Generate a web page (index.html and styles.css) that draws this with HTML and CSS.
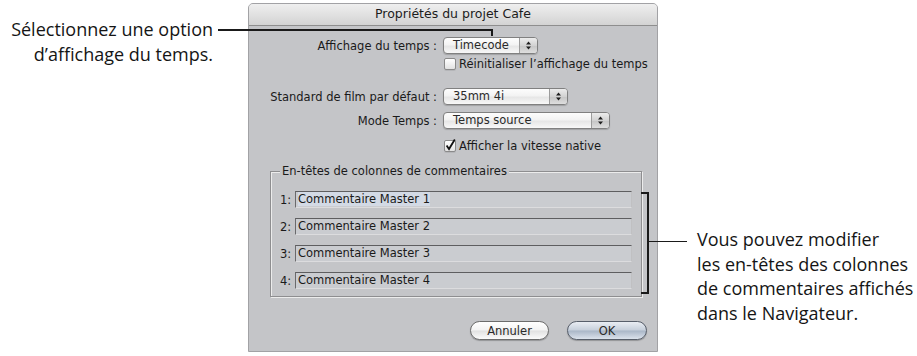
FILE: index.html
```html
<!DOCTYPE html>
<html lang="fr">
<head>
    <meta charset="UTF-8">
    <title>Propriétés du projet Cafe</title>
    <link rel="stylesheet" href="styles.css">
</head>
<body>
    <div class="page">
        <div class="note note-left">Sélectionnez une option<br>d’affichage du temps.</div>

        <div class="window">
            <div class="titlebar">Propriétés du projet Cafe</div>
            <div class="content">
                <div class="row row-popup first">
                    <label>Affichage du temps :</label>
                    <div class="popup w-time">
                        <span class="value">Timecode</span>
                        <span class="arrows"><svg width="5" height="9" viewBox="0 0 5 9"><polygon points="0,3.6 2.5,0.6 5,3.6"/><polygon points="0,5.4 2.5,8.4 5,5.4"/></svg></span>
                    </div>
                </div>
                <div class="row row-check first-check">
                    <span></span>
                    <label class="check"><span class="box"></span>Réinitialiser l’affichage du temps</label>
                </div>
                <div class="row row-popup second">
                    <label>Standard de film par défaut :</label>
                    <div class="popup w-film">
                        <span class="value">35mm 4i</span>
                        <span class="arrows"><svg width="5" height="9" viewBox="0 0 5 9"><polygon points="0,3.6 2.5,0.6 5,3.6"/><polygon points="0,5.4 2.5,8.4 5,5.4"/></svg></span>
                    </div>
                </div>
                <div class="row row-popup third">
                    <label>Mode Temps :</label>
                    <div class="popup w-mode">
                        <span class="value">Temps source</span>
                        <span class="arrows"><svg width="5" height="9" viewBox="0 0 5 9"><polygon points="0,3.6 2.5,0.6 5,3.6"/><polygon points="0,5.4 2.5,8.4 5,5.4"/></svg></span>
                    </div>
                </div>
                <div class="row row-check second-check">
                    <span></span>
                    <label class="check"><span class="box"><svg width="12" height="12" viewBox="0 0 12 12"><path d="M2.6 5.6 L5 9 L10.8 -0.5"/></svg></span>Afficher la vitesse native</label>
                </div>

                <div class="group">
                    <div class="group-title">En-têtes de colonnes de commentaires</div>
                    <div class="field-row"><span class="num">1:</span><div class="field"><span class="sel">Commentaire Master 1</span></div></div>
                    <div class="field-row"><span class="num">2:</span><div class="field">Commentaire Master 2</div></div>
                    <div class="field-row"><span class="num">3:</span><div class="field">Commentaire Master 3</div></div>
                    <div class="field-row"><span class="num">4:</span><div class="field">Commentaire Master 4</div></div>
                </div>

                <div class="buttons">
                    <button class="btn btn-cancel">Annuler</button>
                    <button class="btn btn-default">OK</button>
                </div>
            </div>
        </div>

        <div class="note note-right">Vous pouvez modifier<br>les en-têtes des colonnes<br>de commentaires affichés<br>dans le Navigateur.</div>

        <!-- traits de légende -->
        <div class="line line-left"></div>
        <div class="line line-tick"></div>
        <div class="line bracket"></div>
        <div class="line line-right"></div>
    </div>
</body>
</html>
```

FILE: styles.css
```css
body {
    margin: 0;
    background: #fff;
    font-family: "DejaVu Sans", sans-serif;
}
.page {
    position: relative;
    display: flex;
    width: 917px;
    height: 356px;
    overflow: hidden;
}
.note {
    flex: none;
    font-family: "Open Sans", sans-serif;
    font-size: 18px;
    line-height: 24.5px;
    color: #151515;
}
.note-left {
    width: 248px;
    box-sizing: border-box;
    padding: 17px 35px 0 0;
    text-align: right;
}
.note-right {
    padding: 227px 0 0 39px;
    white-space: nowrap;
}
.window {
    flex: none;
    width: 410px;
    height: 349px;
    margin-top: 3px;
    box-sizing: border-box;
    background: #c4c5c8;
    border: 1px solid #a2a2a5;
    border-radius: 5px 5px 0 0;
}
.titlebar {
    height: 21px;
    line-height: 20px;
    text-align: center;
    font-size: 12.5px;
    color: #1c1c1c;
    background: linear-gradient(#efefef, #d3d3d3);
    border-bottom: 1px solid #8e8e8e;
    border-radius: 4px 4px 0 0;
}
.content {
    font-size: 11.5px;
    color: #1a1a1a;
}
.row {
    display: grid;
    grid-template-columns: 188px auto;
    column-gap: 6px;
    align-items: center;
}
.row label {
    text-align: right;
    white-space: nowrap;
}
.row-popup {
    height: 16px;
}
.row-check {
    height: 12px;
}
.first { margin-top: 11px; }
.first-check { margin-top: 4px; }
.second { margin-top: 19px; }
.third { margin-top: 8px; }
.second-check { margin-top: 11px; }

.popup {
    display: flex;
    align-items: stretch;
    height: 17px;
    box-sizing: border-box;
    border: 1px solid #808080;
    border-radius: 4px;
    background: linear-gradient(#fdfdfd, #f3f3f3 45%, #e6e6e6 55%, #f8f8f8);
    box-shadow: 0 1px 1px rgba(0, 0, 0, 0.18);
}
.w-time { width: 95px; }
.w-film { width: 125px; }
.w-mode { width: 167px; }
.popup .value {
    flex: 1;
    padding-left: 9px;
    line-height: 15px;
    text-align: left;
    white-space: nowrap;
    color: #2a2a2a;
}
.popup .arrows {
    width: 17px;
    display: flex;
    align-items: center;
    justify-content: center;
    border-left: 1px solid #9c9c9c;
    border-radius: 0 3px 3px 0;
    background: linear-gradient(#ececec, #d2d2d2 50%, #c5c5c5 52%, #dedede);
}
.popup .arrows polygon {
    fill: #1e1e1e;
}
.check {
    display: flex;
    align-items: center;
    text-align: left !important;
}
.box {
    flex: none;
    width: 12px;
    height: 12px;
    box-sizing: border-box;
    margin: 0 3px 0 1px;
    border: 1px solid #8a8a8a;
    border-radius: 2px;
    background: linear-gradient(#fff, #e2e2e2);
    box-shadow: 0 1px 0 rgba(0, 0, 0, 0.08);
    position: relative;
}
.box svg {
    position: absolute;
    left: -1px;
    top: -1px;
    overflow: visible;
}
.box path {
    fill: none;
    stroke: #111;
    stroke-width: 1.8;
}

.group {
    width: 372px;
    margin: 20px 0 0 21px;
    box-sizing: border-box;
    padding: 0 9px 7px 9px;
    border: 1px solid #8e8e90;
    box-shadow: 1px 1px 0 #ececec, inset 1px 1px 0 #ececec;
}
.group-title {
    width: max-content;
    margin: -7px 0 0 0;
    padding: 0 2px;
    line-height: 13px;
    background: #c4c5c8;
}
.field-row {
    display: flex;
    align-items: center;
    margin-top: 10px;
}
.group-title + .field-row {
    margin-top: 13px;
}
.num {
    width: 15px;
    flex: none;
}
.field {
    flex: 1;
    height: 17px;
    box-sizing: border-box;
    padding-left: 2px;
    line-height: 15px;
    border: 1px solid;
    border-color: #5e5e60 #c0c0c2 #dcdcde #6a6a6c;
    background: #caccd0;
}
.sel {
    background: #d3dae5;
}

.buttons {
    display: flex;
    justify-content: flex-end;
    gap: 18px;
    margin-top: 24px;
    padding-right: 10px;
}
.btn {
    height: 19px;
    box-sizing: border-box;
    padding: 0;
    font-family: "DejaVu Sans", sans-serif;
    font-size: 11.5px;
    color: #2a2a2a;
    border: 1px solid #6c6c6c;
    border-radius: 10px;
    box-shadow: 0 1px 1px rgba(0, 0, 0, 0.25);
}
.btn-cancel {
    width: 79px;
    background: linear-gradient(#ffffff, #f3f3f3 48%, #e1e1e1 52%, #fbfbfb);
}
.btn-default {
    width: 80px;
    border-color: #575e6a;
    background: linear-gradient(#e9edf3, #c6cfdb 48%, #a9b6c7 52%, #dbe2ec);
}

.line {
    position: absolute;
    border: 0 solid #1a1a1a;
}
.line-left {
    left: 218px;
    top: 29px;
    width: 275px;
    border-top-width: 2px;
}
.line-tick {
    left: 491px;
    top: 29px;
    height: 7px;
    border-left-width: 2px;
}
.bracket {
    left: 641px;
    top: 192px;
    width: 6px;
    height: 98px;
    border-width: 2px 2px 2px 0;
}
.line-right {
    left: 648px;
    top: 241px;
    width: 39px;
    border-top-width: 1.5px;
}
```
